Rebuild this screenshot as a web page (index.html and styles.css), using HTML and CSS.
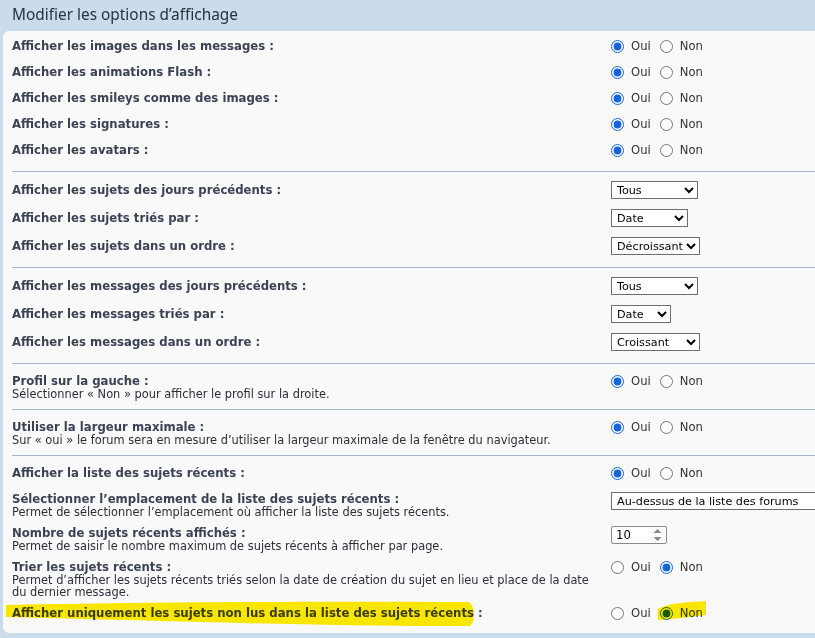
FILE: index.html
```html
<!DOCTYPE html>
<html lang="fr">
<head>
    <meta charset="UTF-8">
    <title>Options d’affichage</title>
    <link rel="stylesheet" href="styles.css">
</head>
<body>
<h3 class="title">Modifier les options d’affichage</h3>
<div class="panel">
    <fieldset class="group first">
        <dl class="row">
            <dt><label>Afficher les images dans les messages :</label></dt>
            <dd><label class="opt"><input type="radio" name="images" checked>Oui</label><label class="opt"><input type="radio" name="images">Non</label></dd>
        </dl>
        <dl class="row">
            <dt><label>Afficher les animations Flash :</label></dt>
            <dd><label class="opt"><input type="radio" name="flash" checked>Oui</label><label class="opt"><input type="radio" name="flash">Non</label></dd>
        </dl>
        <dl class="row">
            <dt><label>Afficher les smileys comme des images :</label></dt>
            <dd><label class="opt"><input type="radio" name="smilies" checked>Oui</label><label class="opt"><input type="radio" name="smilies">Non</label></dd>
        </dl>
        <dl class="row">
            <dt><label>Afficher les signatures :</label></dt>
            <dd><label class="opt"><input type="radio" name="sigs" checked>Oui</label><label class="opt"><input type="radio" name="sigs">Non</label></dd>
        </dl>
        <dl class="row">
            <dt><label>Afficher les avatars :</label></dt>
            <dd><label class="opt"><input type="radio" name="avatars" checked>Oui</label><label class="opt"><input type="radio" name="avatars">Non</label></dd>
        </dl>
    </fieldset>

    <fieldset class="group">
        <dl class="row sel-row">
            <dt><label>Afficher les sujets des jours précédents :</label></dt>
            <dd><select class="sel-days">
                <option selected>Tous</option><option>1 jour</option><option>7 jours</option><option>2 semaines</option><option>1 mois</option>
            </select></dd>
        </dl>
        <dl class="row sel-row">
            <dt><label>Afficher les sujets triés par :</label></dt>
            <dd><select class="sel-sort">
                <option>Auteur</option><option selected>Date</option><option>Réponses</option><option>Sujet</option><option>Vues</option>
            </select></dd>
        </dl>
        <dl class="row sel-row">
            <dt><label>Afficher les sujets dans un ordre :</label></dt>
            <dd><select class="sel-dir">
                <option>Croissant</option><option selected>Décroissant</option>
            </select></dd>
        </dl>
    </fieldset>

    <fieldset class="group">
        <dl class="row sel-row">
            <dt><label>Afficher les messages des jours précédents :</label></dt>
            <dd><select class="sel-days">
                <option selected>Tous</option><option>1 jour</option><option>7 jours</option><option>2 semaines</option><option>1 mois</option>
            </select></dd>
        </dl>
        <dl class="row sel-row">
            <dt><label>Afficher les messages triés par :</label></dt>
            <dd><select class="sel-sort-short">
                <option>Auteur</option><option selected>Date</option><option>Sujet</option>
            </select></dd>
        </dl>
        <dl class="row sel-row">
            <dt><label>Afficher les messages dans un ordre :</label></dt>
            <dd><select class="sel-dir">
                <option selected>Croissant</option><option>Décroissant</option>
            </select></dd>
        </dl>
    </fieldset>

    <fieldset class="group">
        <dl class="row has-desc">
            <dt><label>Profil sur la gauche :</label><span class="desc">Sélectionner « Non » pour afficher le profil sur la droite.</span></dt>
            <dd><label class="opt"><input type="radio" name="profile" checked>Oui</label><label class="opt"><input type="radio" name="profile">Non</label></dd>
        </dl>
    </fieldset>

    <fieldset class="group">
        <dl class="row has-desc">
            <dt><label>Utiliser la largeur maximale :</label><span class="desc">Sur « oui » le forum sera en mesure d’utiliser la largeur maximale de la fenêtre du navigateur.</span></dt>
            <dd><label class="opt"><input type="radio" name="width" checked>Oui</label><label class="opt"><input type="radio" name="width">Non</label></dd>
        </dl>
    </fieldset>

    <fieldset class="group last">
        <dl class="row">
            <dt><label>Afficher la liste des sujets récents :</label></dt>
            <dd><label class="opt"><input type="radio" name="recent" checked>Oui</label><label class="opt"><input type="radio" name="recent">Non</label></dd>
        </dl>
        <dl class="row has-desc">
            <dt><label>Sélectionner l’emplacement de la liste des sujets récents :</label><span class="desc">Permet de sélectionner l’emplacement où afficher la liste des sujets récents.</span></dt>
            <dd><select class="sel-place">
                <option selected>Au-dessus de la liste des forums</option><option>Au-dessous de la liste des forums</option>
            </select></dd>
        </dl>
        <dl class="row has-desc">
            <dt><label>Nombre de sujets récents affichés :</label><span class="desc">Permet de saisir le nombre maximum de sujets récents à afficher par page.</span></dt>
            <dd><input class="num" type="number" value="10" min="1" max="100"></dd>
        </dl>
        <dl class="row has-desc">
            <dt><label>Trier les sujets récents :</label><span class="desc">Permet d’afficher les sujets récents triés selon la date de création du sujet en lieu et place de la date du dernier message.</span></dt>
            <dd><label class="opt"><input type="radio" name="recent_sort">Oui</label><label class="opt"><input type="radio" name="recent_sort" checked>Non</label></dd>
        </dl>
        <dl class="row">
            <dt><label>Afficher uniquement les sujets non lus dans la liste des sujets récents :</label></dt>
            <dd><label class="opt"><input type="radio" name="recent_unread">Oui</label><label class="opt"><input type="radio" name="recent_unread" checked>Non</label></dd>
        </dl>
    </fieldset>
</div>

<!-- coup de surligneur par-dessus la capture -->
<svg class="marker" width="815" height="638" viewBox="0 0 815 638">
    <path d="M6,605 C90,603 250,601 468,602 C475,604 476,620 470,626 C330,627 150,620 6,617 Z"/>
    <path d="M658,609 C668,603 688,602 706,601 L706,615 C690,617 672,619 658,620 Z"/>
</svg>
</body>
</html>
```

FILE: styles.css
```css
*{
    box-sizing: border-box;
}
html, body{
    margin: 0;
    padding: 0;
}
body{
    background: #cadbeb;
    font-family: "DejaVu Sans", Verdana, sans-serif;
    font-size: 11px;
    color: #333;
    overflow: hidden;
    height: 638px;
    position: relative;
}
.title{
    margin: 0;
    height: 31px;
    padding: 4px 0 0 12px;
    font-family: "Noto Sans", "Open Sans", sans-serif;
    font-size: 15.4px;
    font-weight: normal;
    line-height: 22px;
    color: #28313f;
}
.panel{
    margin: 0 -10px 0 3px;
    height: 602px;
    background: #f9f9f9;
    border-radius: 6px 0 0 6px;
}

.group{
    margin: 0 0 0 9px;
    padding: 4px 0 7px;
    border: none;
    border-top: 1px solid #a6b6c7;
    min-width: 0;
}
.group.first{
    border-top: none;
    padding: 2px 0 8px;
}

.row{
    display: flex;
    margin: 0;
    padding: 6px 0;
}
.row.has-desc{
    padding-bottom: 2px;
}
.sel-row{
    padding: 5px 0;
}
.sel-row dt{
    padding-top: 2px;
}
.row dt{
    width: 599px;
    padding-right: 8px;
    flex: none;
}
.row dt label{
    display: block;
    font-size: 11.7px;
    font-weight: bold;
    line-height: 14px;
    color: #3a4254;
}
.desc{
    display: block;
    line-height: 12px;
    font-size: 11.4px;
    color: #2b2f3a;
}
.row dd{
    margin: 0;
    display: flex;
    align-items: flex-start;
}

.opt{
    display: inline-flex;
    align-items: center;
    height: 14px;
    margin-right: 9px;
    font-size: 11.6px;
    color: #333;
}
.opt input{
    width: 13px;
    height: 13px;
    margin: 0 7px 0 0;
    accent-color: #1565d8;
}

select{
    height: 18px;
    margin: 0;
    padding: 0 0 0 1px;
    border: 1px solid #6e6e6e;
    border-radius: 0;
    background: #fff;
    font-family: "DejaVu Sans", Verdana, sans-serif;
    font-size: 11.2px;
    color: #000;
}
.sel-days{
    width: 87px;
}
.sel-sort{
    width: 77px;
}
.sel-sort-short{
    width: 60px;
}
.sel-dir{
    width: 89px;
}
.sel-place{
    width: 220px;
}

.num{
    width: 56px;
    height: 18px;
    margin: 0;
    padding: 0 1px 0 4px;
    border: 1px solid #8a8a8a;
    border-radius: 2px;
    background: #fff;
    font-family: "DejaVu Sans", Verdana, sans-serif;
    font-size: 11.6px;
    color: #000;
}
.num::-webkit-inner-spin-button{
    opacity: 1;
    height: 14px;
}

.marker{
    position: absolute;
    top: 0;
    left: 0;
    pointer-events: none;
    mix-blend-mode: multiply;
}
.marker path{
    fill: #ffec00;
}
```
